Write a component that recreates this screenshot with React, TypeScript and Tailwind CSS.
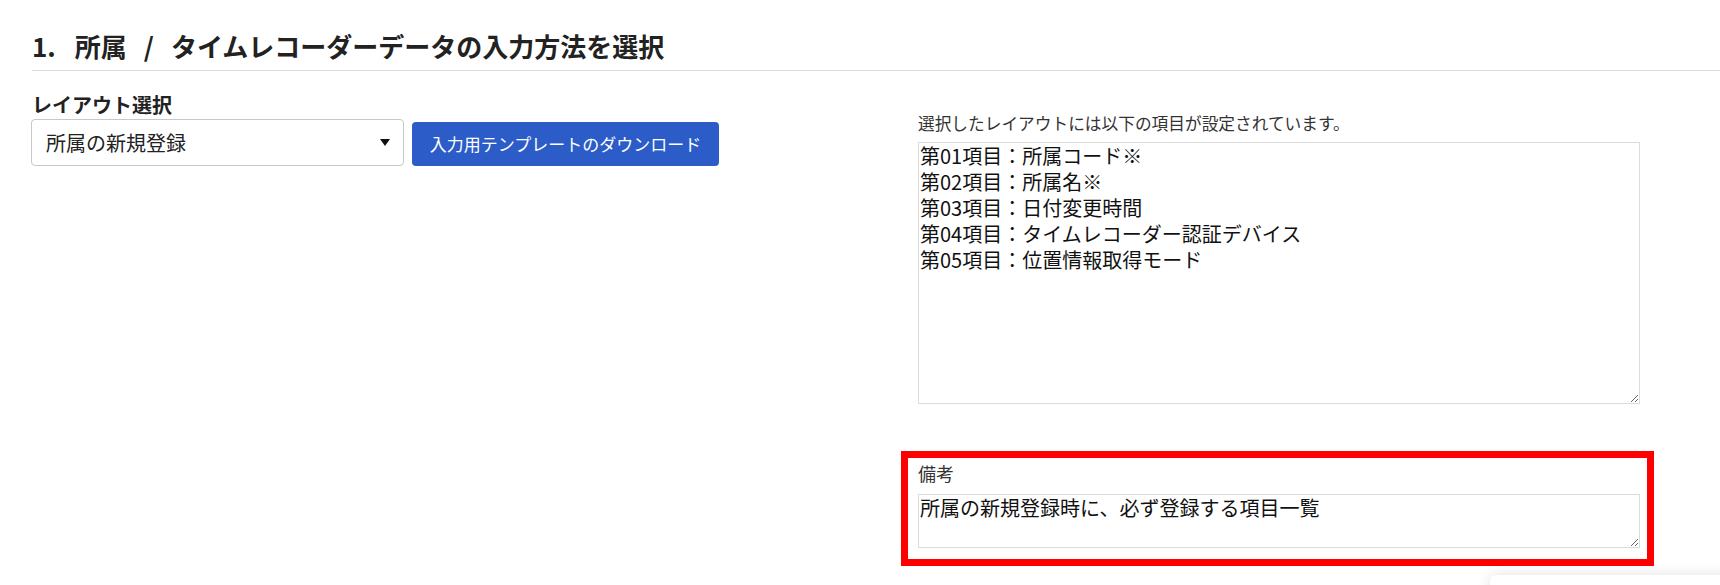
import React from 'react';

const FONT = "font-['Noto_Sans_CJK_JP','Noto_Sans',sans-serif]";

const LAYOUT_ITEMS = [
  '第01項目：所属コード※',
  '第02項目：所属名※',
  '第03項目：日付変更時間',
  '第04項目：タイムレコーダー認証デバイス',
  '第05項目：位置情報取得モード',
];

export default function App() {
  const [layout, setLayout] = React.useState('new');

  return (
    <div className={`relative h-[585px] w-full overflow-hidden bg-white text-[#222] ${FONT}`}>
      {/* Section title */}
      <div className="ml-[32px] h-[71px] border-b border-[#dcdcdc] pt-[29px]">
        <h2 className="flex text-[26px] font-bold leading-[34px] text-[#222]">
          <span>1.</span>
          <span className="ml-[19px]">所属</span>
          <span className="mx-[17px]">/</span>
          <span>タイムレコーダーデータの入力方法を選択</span>
        </h2>
      </div>

      <div className="flex pl-[31px]">
        {/* Left: layout select */}
        <div className="w-[887px] pt-[20px]">
          <div className="pl-px text-[20px] font-bold leading-[28px]">レイアウト選択</div>
          <div className="flex items-end gap-[8px]">
            <div className="relative">
              <select
                value={layout}
                onChange={(e) => setLayout(e.target.value)}
                className="h-[47px] w-[373px] appearance-none rounded-[4px] border border-[#c8c8c8] bg-white pl-[14px] text-[20px] text-[#222] outline-none"
              >
                <option value="new">所属の新規登録</option>
                <option value="edit">所属の変更</option>
              </select>
              <svg
                className="pointer-events-none absolute right-[14px] top-[20px]"
                width="10"
                height="7"
                viewBox="0 0 10 7"
              >
                <path d="M0 0h10L5 7z" fill="#111" />
              </svg>
            </div>
            <button className="h-[44px] w-[307px] rounded-[4px] bg-[#2b5cc8] text-[17px] text-white">
              入力用テンプレートのダウンロード
            </button>
          </div>
        </div>

        {/* Right: item list and memo */}
        <div className="pt-[40px]">
          <div className="mb-[7px] text-[16.7px] leading-[24px] text-[#333]">
            選択したレイアウトには以下の項目が設定されています。
          </div>
          <textarea
            readOnly
            value={LAYOUT_ITEMS.join('\n')}
            className="block h-[262px] w-[722px] border border-[#dcdcdc] px-px text-[20px] leading-[26px] text-[#111] outline-none"
          />

          <div className="ml-[-17px] mt-[47px] w-[753px] border-[7px] border-[#ff0000] pb-[11px] pl-[10px] pr-[7px] pt-[3px]">
            <div className="mb-[9px] text-[18px] leading-[24px] text-[#333]">備考</div>
            <textarea
              readOnly
              value="所属の新規登録時に、必ず登録する項目一覧"
              className="block h-[54px] w-[722px] border border-[#dcdcdc] px-px text-[20px] leading-[26px] text-[#111] outline-none"
            />
          </div>
        </div>
      </div>

      {/* floating panel edge peeking in at the bottom right */}
      <div className="absolute bottom-[-34px] right-[-10px] h-[44px] w-[240px] rounded-[6px] bg-white shadow-[0_0_14px_rgba(0,0,0,0.12)]" />
    </div>
  );
}
